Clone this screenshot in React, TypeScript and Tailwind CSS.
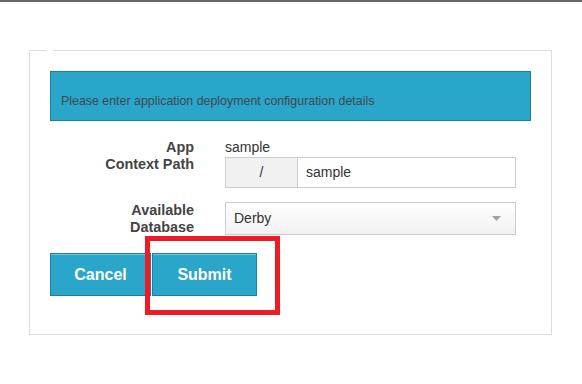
export default function App() {
  return (
    <div className="relative min-h-[384px] w-[582px] bg-white font-['Liberation_Sans',Arial,sans-serif]">
      <div className="h-[2px] bg-[#666666]" />

      <div className="relative ml-[29px] mt-[48px] h-[285px] w-[523px] border border-[#dddddd] px-[20px] pt-[20px]">
        {/* legend gap in the top border */}
        <span className="absolute left-[17px] top-[-1px] h-[1px] w-[6px] bg-white" />

        <div className="border border-[#1e7f9b] bg-[#2aa6ca] px-[10px] pb-[12px] pt-[22px] text-[12.4px] leading-[14px] text-[#3f4850]">
          Please enter application deployment configuration details
        </div>

        <div className="mt-[18px] flex flex-col gap-[14px]">
          <div className="flex gap-[31px]">
            <div className="w-[144px] text-right text-[14.4px] font-bold leading-[17px] text-[#444444]">
              <div>App</div>
              <div>Context Path</div>
            </div>
            <div className="w-[291px]">
              <div className="h-[18px] text-[14px] leading-[17px] text-[#333333]">sample</div>
              <div className="flex h-[31px]">
                <div className="flex w-[73px] items-center justify-center border border-[#cccccc] bg-[#f1f1f1] text-[14px] text-[#333333]">
                  /
                </div>
                <input
                  className="w-[218px] border border-l-0 border-[#cccccc] px-[8px] text-[14px] text-[#333333] outline-none"
                  defaultValue="sample"
                />
              </div>
            </div>
          </div>

          <div className="flex gap-[31px]">
            <div className="w-[144px] text-right text-[14.4px] font-bold leading-[17px] text-[#444444]">
              <div>Available</div>
              <div>Database</div>
            </div>
            <div className="flex h-[33px] w-[291px] items-center justify-between border border-[#cccccc] bg-gradient-to-b from-white to-[#f1f1f1] pl-[8px] pr-[14px] text-[14px] text-[#333333]">
              <span>Derby</span>
              <svg width="9" height="5" viewBox="0 0 9 5">
                <path d="M0 0 L9 0 L4.5 5 Z" fill="#a0a0a0" />
              </svg>
            </div>
          </div>
        </div>

        <div className="mt-[17px] flex">
          <button className="h-[43px] w-[101px] border border-[#1e7f9b] bg-[#2aa6ca] text-[16px] font-bold text-white shadow-[inset_0_1px_0_#6fc6df]">
            Cancel
          </button>
          <button className="ml-[1px] h-[43px] w-[105px] border border-[#1e7f9b] bg-[#2aa6ca] text-[16px] font-bold text-white shadow-[inset_0_1px_0_#6fc6df]">
            Submit
          </button>
        </div>
      </div>

      {/* highlight marker */}
      <div className="pointer-events-none absolute left-[145px] top-[236px] h-[79px] w-[135px] border-[5px] border-[#ed1c24]" />
    </div>
  );
}
